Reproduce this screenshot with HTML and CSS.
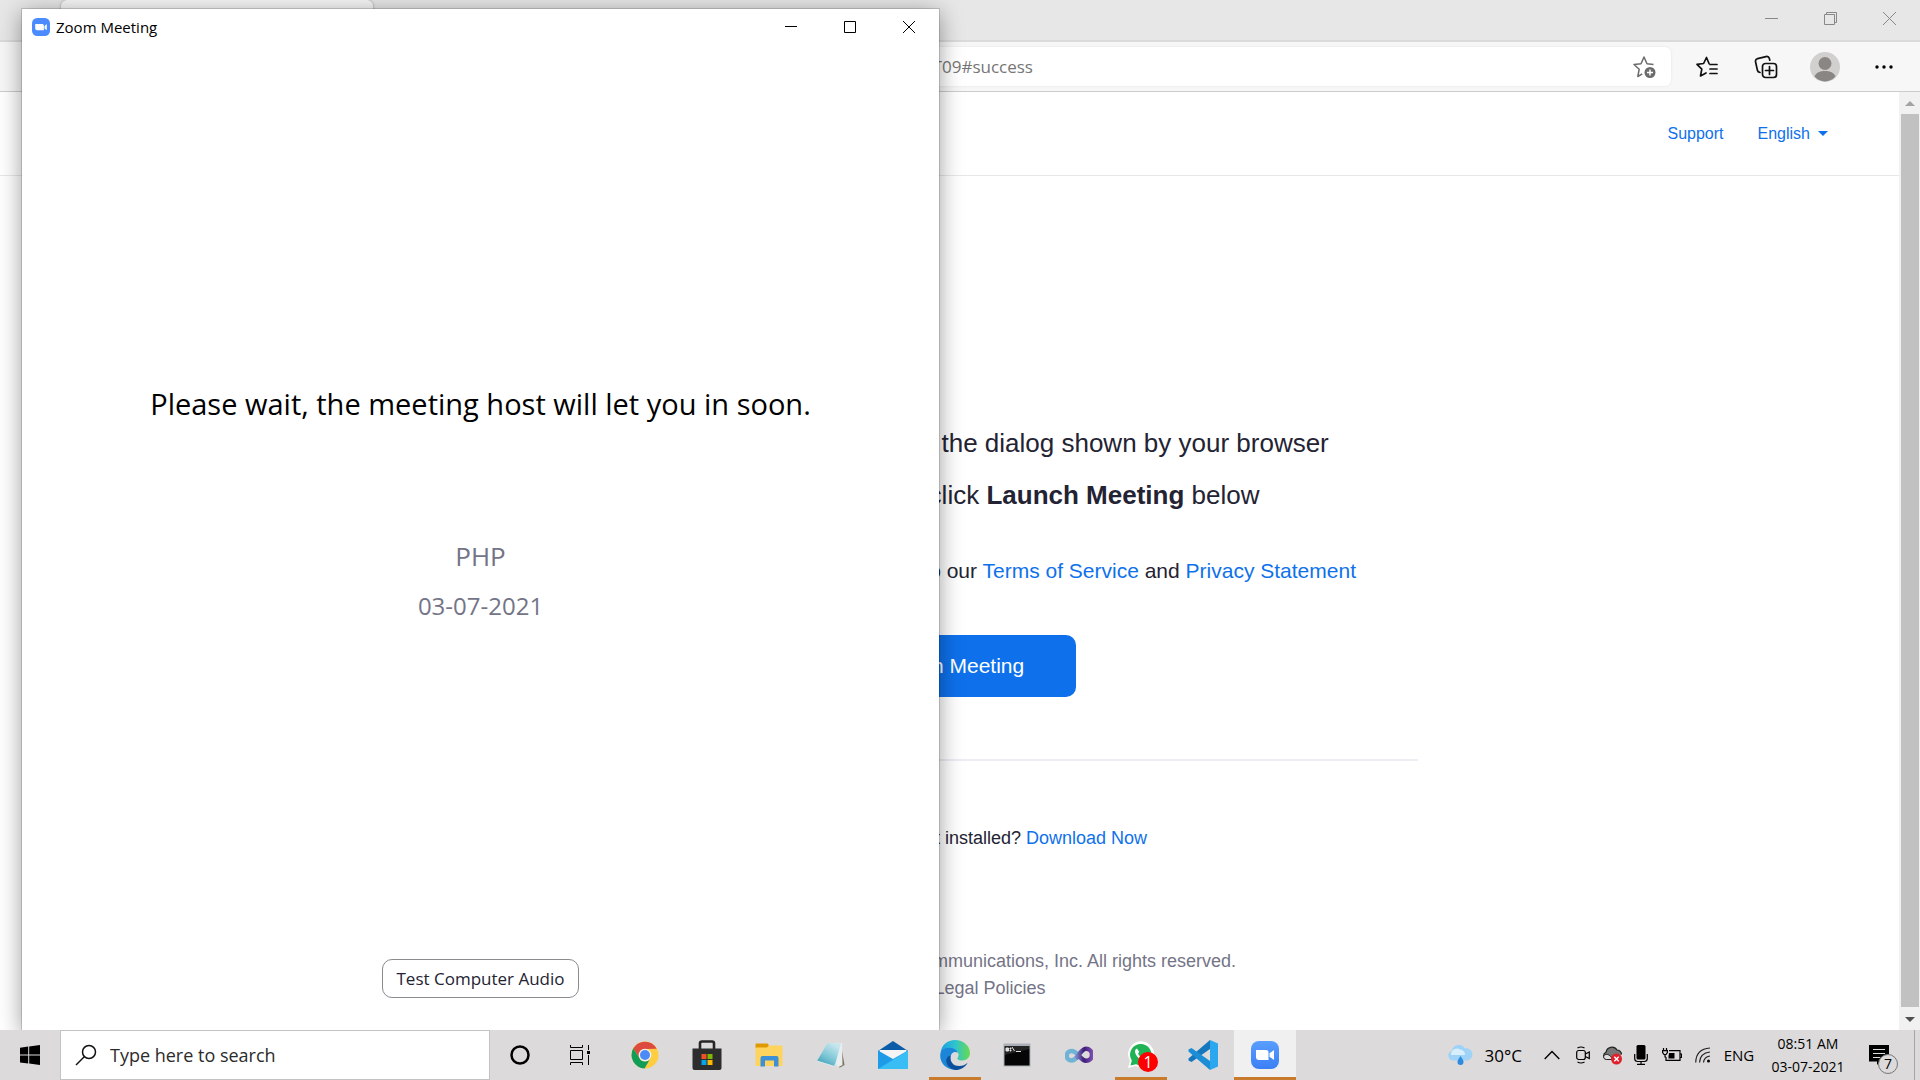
FILE: index.html
```html
<!DOCTYPE html>
<html lang="en">
<head>
<meta charset="utf-8">
<title>Launch Meeting - Zoom</title>
<link rel="stylesheet" href="styles.css">
</head>
<body>
<div class="screen">
  <div class="desktop">
    <div class="browser">
      <div class="tabstrip">
        <div class="tab"></div>
        <div class="caption-buttons">
          <button class="caption" aria-label="Minimize"><svg width="13" height="13" viewBox="0 0 13 13"><path d="M0 6.5h13"/></svg></button>
          <button class="caption" aria-label="Restore"><svg width="13" height="13" viewBox="0 0 13 13"><path d="M.5 2.5h10v10h-10zM2.500 2.500v-2h10v10h-2"/></svg></button>
          <button class="caption" aria-label="Close"><svg width="13" height="13" viewBox="0 0 13 13"><path d="M0 0l13 13M13 0L0 13"/></svg></button>
        </div>
      </div>
      <div class="toolbar">
        <div class="urlbar">
          <input class="url" type="text" aria-label="Address" value="us04web.zoom.us/j/76095224187?pwd=aGJ0Vk5wQmRhL3ZsdFNjWVhUM1h6Zz09LKdGVhbTEyMT09#success">
          <button class="tool-add" aria-label="Add to favorites"><svg width="24" height="24" viewBox="0 0 24 24" fill="none" stroke="#6b6b6b" stroke-width="1.5" stroke-linejoin="round"><path d="M21.500 9.500l-6.500-.8L12 2 9 8.700l-7 .8 5.200 4.700L5.800 21.500l4.500-2.600"/><circle cx="18" cy="17.500" r="5.500" fill="#6b6b6b" stroke="none"/><path d="M18 14.500v6M15 17.500h6" stroke="#fff"/></svg></button>
        </div>
        <button class="tool" aria-label="Favorites"><svg width="24" height="24" viewBox="0 0 24 24" fill="none" stroke="#111" stroke-width="1.700" stroke-linejoin="round" stroke-linecap="round"><path d="M14 8.500L11.500 2.500 8.600 8.500 2 9.400l4.800 4.700-1.300 6.800 5.500-3"/><path d="M15 9.500h7M15 14h7M15 18.500h7"/></svg></button>
        <button class="tool" aria-label="Collections"><svg width="24" height="24" viewBox="0 0 24 24" fill="none" stroke="#111" stroke-width="1.700" stroke-linejoin="round" stroke-linecap="round"><rect x="8.500" y="8.500" width="14" height="14" rx="3"/><path d="M15.500 11.500v8M11.500 15.500h8M6 17.500c-1.500-.3-2.300-1-2.600-2.300L1.600 7c-.4-1.700.4-3 2-3.400l8.400-2c1.700-.4 2.900.4 3.400 2l.4 1.600"/></svg></button>
        <button class="tool" aria-label="Profile"><svg width="30" height="30" viewBox="0 0 30 30"><circle cx="15" cy="15" r="15" fill="#d2d0ce"/><circle cx="15" cy="11.500" r="6.500" fill="#8a8683"/><path d="M4.500 24.500C6 20.500 10 19 15 19s9 1.500 10.500 5.500A15 15 0 0 1 15 29.500 15 15 0 0 1 4.500 24.500z" fill="#8a8683"/></svg></button>
        <button class="tool" aria-label="Settings and more"><svg width="18" height="4" viewBox="0 0 18 4"><circle cx="2" cy="2" r="1.700"/><circle cx="9" cy="2" r="1.700"/><circle cx="16" cy="2" r="1.700"/></svg></button>
      </div>
      <div class="viewport">
        <div class="page">
          <header class="site-header">
            <a href="#support">Support</a>
            <a class="language" href="#language">English <svg width="10" height="5" viewBox="0 0 10 5"><path d="M0 0h10L5 5z" fill="#0e71eb"/></svg></a>
          </header>
          <main class="launch">
            <p class="lead">Click <b>Open Zoom Meetings</b> on the dialog shown by your browser</p>
            <p class="lead">If you don’t see a dialog, click <b>Launch Meeting</b> below</p>
            <p class="terms">By clicking "Launch Meeting", you agree to our <a href="#terms">Terms of Service</a> and <a href="#privacy">Privacy Statement</a></p>
            <button class="launch-button">Launch Meeting</button>
            <hr class="rule">
            <p class="download">Don’t have Zoom Client installed? <a href="#download">Download Now</a></p>
          </main>
          <footer class="site-footer">
            <p>Copyright © 2021 Zoom Video Communications, Inc. All rights reserved.</p>
            <p>Privacy &amp; Legal Policies</p>
          </footer>
        </div>
        <div class="scrollbar">
          <svg width="10" height="5" viewBox="0 0 10 5"><path d="M0 5h10L5 0z" fill="#a3a3a3"/></svg>
          <div class="thumb"></div>
          <svg width="10" height="5" viewBox="0 0 10 5"><path d="M0 0h10L5 5z" fill="#505050"/></svg>
        </div>
      </div>
    </div>

    <section class="meeting">
      <div class="titlebar">
        <svg width="18" height="18" viewBox="0 0 28 28"><rect width="28" height="28" rx="8" fill="#4a8cff"/><path d="M5 9.500h11a2.500 2.500 0 0 1 2.500 2.500v7H8a3 3 0 0 1-3-3zM19.500 12.500L23 9.500v9.500l-3.500-2.500z" fill="#fff"/></svg>
        <h1 class="title">Zoom Meeting</h1>
        <button class="caption dark" aria-label="Minimize"><svg width="12" height="12" viewBox="0 0 12 12"><path d="M0 5.500h12"/></svg></button>
        <button class="caption dark" aria-label="Maximize"><svg width="12" height="12" viewBox="0 0 12 12"><path d="M.5.5h11v11H.5z"/></svg></button>
        <button class="caption dark" aria-label="Close"><svg width="12" height="12" viewBox="0 0 12 12"><path d="M0 0l12 12M12 0L0 12"/></svg></button>
      </div>
      <div class="waiting">
        <h2 class="notice">Please wait, the meeting host will let you in soon.</h2>
        <p class="topic">PHP</p>
        <p class="date">03-07-2021</p>
        <button class="audio">Test Computer Audio</button>
      </div>
    </section>
  </div>

  <nav class="taskbar">
    <button class="start" aria-label="Start"><svg width="20" height="20" viewBox="0 0 20 20"><path d="M0 2.700L8.200 1.500V9.500H0zM9.200 1.400L20 0v9.500H9.200zM0 10.500h8.200v8L0 17.400zM9.200 10.500H20V20L9.200 18.600z"/></svg></button>
    <label class="search">
      <svg width="22" height="22" viewBox="0 0 22 22" fill="none" stroke="#111" stroke-width="1.500"><circle cx="14" cy="8" r="6.500"/><path d="M9.500 12.500L1 21"/></svg>
      <input type="text" aria-label="Search" placeholder="Type here to search">
    </label>
    <button class="system" aria-label="Cortana"><svg width="20" height="20" viewBox="0 0 20 20"><circle cx="10" cy="10" r="8.500" fill="none" stroke="#000" stroke-width="2.500"/></svg></button>
    <button class="system" aria-label="Task View"><svg width="20" height="20" viewBox="0 0 20 20" fill="none" stroke="#000"><path d="M.5 5.500h12v9H.500zM.5 0v2.500h12V0M.5 20v-2.500h12V20M18.500 0v5M18.500 10v10"/><path d="M17 6h3v3h-3z" fill="#000" stroke="none"/></svg></button>
    <div class="apps">
      <button class="app" aria-label="Chrome"><svg width="28" height="28" viewBox="0 0 28 28"><circle cx="14" cy="14" r="13.500" fill="#ffcd40"/><path d="M2.300 7.300A13.500 13.500 0 0 1 25.700 7.800L14 8a6.300 6.300 0 0 0-5.500 9.200z" fill="#dd4b3e"/><path d="M2.300 7.300A13.500 13.500 0 0 0 13.500 27.500L19.500 17.200A6.300 6.300 0 0 1 8.500 17.200z" fill="#119c58"/><circle cx="14" cy="14" r="6.300" fill="#f1f1f1"/><circle cx="14" cy="14" r="5" fill="#4c8bf5"/></svg></button>
      <button class="app" aria-label="Microsoft Store"><svg width="30" height="30" viewBox="0 0 30 30"><path d="M8 9V3.500A2 2 0 0 1 10 1.500h10a2 2 0 0 1 2 2V9" fill="none" stroke="#262626" stroke-width="2.600"/><path d="M.5 8.500h29V28a2 2 0 0 1-2 2h-25a2 2 0 0 1-2-2z" fill="#2d2d2d"/><path d="M9.500 14h5v5h-5z" fill="#f25022"/><path d="M15.500 14h5v5h-5z" fill="#7fba00"/><path d="M9.500 20h5v5h-5z" fill="#00a4ef"/><path d="M15.500 20h5v5h-5z" fill="#ffb900"/></svg></button>
      <button class="app" aria-label="File Explorer"><svg width="28" height="24" viewBox="0 0 28 24"><path d="M.5 1.500A1 1 0 0 1 1.500.5h11l1.500 2-2 3H.5z" fill="#e09a00"/><path d="M.5 4.500H12l2-2h12.500a1 1 0 0 1 1 1V23H.5z" fill="#ffd45e"/><path d="M5.500 23.500V15a2 2 0 0 1 2-2h14a2 2 0 0 1 2 2v8.500h-4.500v-6h-9v6z" fill="#3d8fd6"/></svg></button>
      <button class="app" aria-label="Notepad"><svg width="28" height="26" viewBox="0 0 28 26"><defs><linearGradient id="pad" x1="0" y1="1" x2=".6" y2="0"><stop offset="0" stop-color="#2f93ad"/><stop offset=".5" stop-color="#7cc6d6"/><stop offset="1" stop-color="#c4e6ec"/></linearGradient></defs><path d="M24 3l3.500 20-4.500 2.500-3-1z" fill="#7d715c"/><path d="M11 1.500L25 1l.5 22-5 2.500z" fill="#e8edef"/><path d="M10.500 1L24 1.500 17.500 24.500 0 19z" fill="url(#pad)"/><path d="M0 19l17.500 5.500 1-3" fill="none" stroke="#dcebee"/></svg></button>
      <button class="app" aria-label="Mail"><svg width="30" height="28" viewBox="0 0 30 28"><path d="M0 10L15 0l15 10v4H0z" fill="#0a5ba8"/><path d="M1.500 9h27v8L15 22 1.500 17z" fill="#f4f4f4"/><path d="M0 9.500L15 18 30 9.500V28H0z" fill="#1e9be6"/><path d="M0 28L30 9.500V28z" fill="#38bdf4"/></svg></button>
      <button class="app open" aria-label="Edge"><svg width="30" height="30" viewBox="0 0 30 30"><defs><linearGradient id="edge-top" x1="0" x2="1"><stop offset="0" stop-color="#1b9fe0"/><stop offset=".5" stop-color="#2fc3cf"/><stop offset="1" stop-color="#67dc4c"/></linearGradient></defs><path d="M.5 13C1.500 5 7.500 0 15 0c8.500 0 15 6 15 13 0 4.500-3.300 7.500-8 7.500-3.500 0-5.500-1.500-4.200-3 1.300-1.600 1-4.500-.8-6.200C13 7.500 4 7.500.5 13z" fill="url(#edge-top)"/><path d="M.2 16C0 11 4 7.800 9 7.800c4 0 7.500 1.700 9 5-4-2.300-7.500.5-7.500 5C10.500 24 16 29 21 28.700 11 32.500.5 26 .2 16z" fill="#1b85d8"/><path d="M10.700 15.500C9 21 13 26 19 26c3.500 0 6.500-1.300 8.700-3.300C25 27.500 20 30 15.500 30 10 29.500 5 24 6.500 19c.7-2 2.200-3.200 4.200-3.500z" fill="#0c4f9c"/></svg></button>
      <button class="app" aria-label="Command Prompt"><svg width="28" height="24" viewBox="0 0 28 24"><rect x=".5" y=".5" width="27" height="23" fill="#a9afb5"/><path d="M1.500 3h25v19.500h-25z" fill="#050505"/><path d="M3 5h2.500v3H3zM7 5h1v1H7zM7 7h1v1H7zM9 4l2.500 4M13 8.500h5" fill="#ddd" stroke="#ddd"/><path d="M1.500 12L26.500 6V3h-25z" fill="#fff" opacity=".12"/></svg></button>
      <button class="app" aria-label="Visual Studio"><svg width="28" height="18" viewBox="0 0 28 18" fill="none" stroke-width="4.500"><defs><linearGradient id="vs-purple" x1="0" x2="1"><stop offset="0" stop-color="#7f86c9"/><stop offset=".5" stop-color="#3d1d78"/><stop offset="1" stop-color="#7b4bb0"/></linearGradient></defs><path d="M14 9C10 14 8.500 14.500 6.500 14.500A4.200 4.200 0 0 1 6.500 5C9 5 11 6.500 14 9.500" stroke="#6fb3d5"/><path d="M11 12.500C14.500 8 17 2.800 21 2.800a6 6 0 0 1 0 12C18 14.800 16 12 13 9" stroke="url(#vs-purple)"/></svg></button>
      <button class="app open whatsapp" aria-label="WhatsApp"><svg width="28" height="28" viewBox="0 0 28 28"><path d="M1 27l2-7A13 13 0 1 1 8.500 25z" fill="#fff"/><path d="M3.500 24.500l1.300-5A10.700 10.700 0 1 1 9 23.200z" fill="#1fb355"/><path d="M10 7.500c-2 .7-2.500 3-1.500 5.200 1.700 3.600 4.500 6.300 8.500 7.300 2 .3 3.500-1 3.500-3l-3-1.500-1.500 1.700c-2.300-1-4-2.700-5-4.700l1.300-1.500z" fill="#fff"/></svg><span class="badge">1</span></button>
      <button class="app" aria-label="Visual Studio Code"><svg width="30" height="30" viewBox="0 0 30 30"><path d="M22 0L30 3.500v23L22 30z" fill="#2aa7ee"/><path d="M22 0v9L3.500 22 .5 20.500v-2z" fill="#1577bd"/><path d="M22 30v-9L3.500 8 .5 9.500v2z" fill="#1b8ed6"/></svg></button>
      <button class="app open active" aria-label="Zoom"><svg width="28" height="28" viewBox="0 0 28 28"><defs><linearGradient id="zoom-blue" x2="0" y2="1"><stop offset="0" stop-color="#5a9eff"/><stop offset="1" stop-color="#3b7ff5"/></linearGradient></defs><rect width="28" height="28" rx="8" fill="url(#zoom-blue)"/><path d="M5 9h10a2.500 2.500 0 0 1 2.500 2.500V19H8a3 3 0 0 1-3-3zM18.500 12.300L23 9v10l-4.500-3.300z" fill="#fff"/></svg></button>
    </div>
    <div class="tray">
      <button class="weather"><svg width="26" height="20" viewBox="0 0 26 20"><path d="M6 15.500a5 5 0 0 1-1-9.800A7 7 0 0 1 18 3.500a6 6 0 0 1 2.500 12z" fill="#9fd2f7"/><path d="M4 10a6 6 0 0 1 9-5.500 5 5 0 0 1 5 5.500z" fill="#d8eefc"/><path d="M13.500 11c2 3 3 4.500 3 6a3 3 0 0 1-6 0c0-1.500 1-3 3-6z" fill="#2f8be0"/></svg>30°C</button>
      <button class="chevron" aria-label="Show hidden icons"><svg width="16" height="10" viewBox="0 0 16 10"><path d="M.7 9L8 1.500 15.300 9" fill="none" stroke="#000" stroke-width="1.400"/></svg></button>
      <button class="narrow" aria-label="Meet Now"><svg width="14" height="18" viewBox="0 0 14 18" fill="none" stroke="#000" stroke-width="1.200"><rect x=".7" y="4.500" width="8.600" height="9" rx="2"/><path d="M9.300 8l4-2v6.500l-4-2M1.500 2Q5 0 8.500 2M1.500 16Q5 18 8.500 16"/></svg></button>
      <button class="medium" aria-label="OneDrive"><svg width="20" height="20" viewBox="0 0 20 20"><path d="M4.500 14.500A3.800 3.800 0 0 1 4 7.300 6 6 0 0 1 15 5a4.500 4.500 0 0 1 4.500 4.500" fill="#777" stroke="#222" stroke-width="1.200"/><path d="M4.500 14.500c-3-.5-3.500-3-2-4.500 3-1.500 6 0 8 4.500z" fill="#ddd" stroke="#222"/><circle cx="14.500" cy="14" r="5.500" fill="#e0202b"/><path d="M12.300 11.800l4.400 4.400M16.700 11.800l-4.400 4.400" stroke="#fff" stroke-width="1.400"/></svg></button>
      <button class="narrow" aria-label="Microphone"><svg width="14" height="20" viewBox="0 0 14 20"><rect x="2.500" width="9" height="14.500" rx="1.500"/><path d="M.7 9v4.500a3 3 0 0 0 3 3h6.600a3 3 0 0 0 3-3V9M7 16.500v2.800M3 19.300h8" fill="none" stroke="#000" stroke-width="1.200"/></svg></button>
      <button class="wide" aria-label="Battery"><svg width="20" height="14" viewBox="0 0 20 14" fill="none" stroke="#000" stroke-width="1.200"><path d="M7 2.600h11v9.800H4V9"/><path d="M18 6h1.500v3.500H18"/><path d="M7 5h5.500v5.500h-6V8.500z" fill="#000" stroke="none"/><path d="M1.500 0v2M4.500 0v2M.6 2.600h4.800v2L4 6.500H2L.6 4.600zM3 6.500V9h1"/></svg></button>
      <button class="narrow" aria-label="Network"><svg width="16" height="16" viewBox="0 0 16 16" fill="none" stroke="#222" stroke-width="1.200"><path d="M.7 15.500Q1 2 15 1M4.500 15.500Q5 6 15 5M8.500 15.500Q9 10 15 9"/><circle cx="13.500" cy="14" r="1.500" fill="#000" stroke="none"/></svg></button>
      <button class="language-input">ENG</button>
      <button class="clock"><span>08:51 AM</span><span>03-07-2021</span></button>
      <button class="notifications" aria-label="Notifications"><svg width="20" height="20" viewBox="0 0 20 20"><path d="M0 0h20v16.500h-9L8 20v-3.500H0z"/><path d="M4 4.500h12M4 8.500h12M4 12.500h7" stroke="#ddd"/></svg><span class="count">7</span></button>
      <button class="show-desktop" aria-label="Show desktop"></button>
    </div>
  </nav>
</div>
</body>
</html>
```
FILE: styles.css
```css
* { box-sizing: border-box; }

body {
  margin: 0;
  font-family: "Open Sans", "Noto Sans", sans-serif;
  color: #000;
}

button {
  font: inherit;
  color: inherit;
  background: none;
  border: 0;
  padding: 0;
}

p, h1, h2 { margin: 0; font-weight: 400; }
a { color: #0e71eb; text-decoration: none; }
svg { display: block; flex: none; }

.screen {
  display: flex;
  flex-direction: column;
  height: 100vh;
  overflow: hidden;
}

.desktop {
  position: relative;
  flex: 1;
  min-height: 0;
  overflow: hidden;
}

/* Browser window */
.browser {
  display: flex;
  flex-direction: column;
  height: 100%;
  background: #fff;
}

.tabstrip {
  display: flex;
  justify-content: space-between;
  height: 42px;
  padding: 0 1px 0 61px;
  background: #e7e7e7;
  border-bottom: 2px solid #dadada;
}

.tab {
  width: 312px;
  background: #f7f7f7;
  border-radius: 6px 6px 0 0;
  box-shadow: 0 0 3px rgba(0, 0, 0, .3);
}

.caption-buttons { display: flex; height: 37px; }

.caption {
  display: flex;
  align-items: center;
  justify-content: center;
  width: 59px;
  height: 100%;
}

.caption path { fill: none; stroke: #888; }
.caption.dark path { stroke: #000; }

.toolbar {
  display: flex;
  align-items: center;
  height: 50px;
  padding: 0 7px 0 160px;
  background: #f7f7f7;
  border-bottom: 1px solid #ccc;
}

.urlbar {
  display: flex;
  flex: 1;
  height: 39px;
  margin-right: 6px;
  padding-right: 15px;
  background: #fff;
  border-radius: 6px;
  box-shadow: 0 0 3px rgba(0, 0, 0, .08);
}

.url {
  flex: 1;
  min-width: 0;
  padding: 0 0 0 8px;
  border: 0;
  background: none;
  font: 17px "Open Sans", sans-serif;
  color: #767676;
}

.tool, .tool-add { display: flex; align-items: center; justify-content: center; }
.tool { width: 59px; height: 100%; }

.viewport { display: flex; flex: 1; min-height: 0; }

.page {
  flex: 1;
  min-width: 0;
  font-family: "Liberation Sans", Arial, sans-serif;
  color: #232333;
  white-space: nowrap;
}

.site-header {
  display: flex;
  align-items: center;
  justify-content: flex-end;
  gap: 34px;
  height: 84px;
  padding-right: 71px;
  border-bottom: 1px solid #e8e8e8;
  font-size: 16px;
}

.language { display: flex; align-items: center; gap: 8px; }

.launch {
  display: flex;
  flex-direction: column;
  align-items: center;
  padding-top: 241px;
}

.lead { font-size: 26px; line-height: 52px; }
.terms { margin-top: 38px; font-size: 21px; line-height: 24px; }

.launch-button {
  width: 253px;
  height: 62px;
  margin-top: 52px;
  border-radius: 10px;
  background: #0e71eb;
  color: #fff;
  font-size: 21px;
}

.rule {
  width: 937px;
  height: 2px;
  margin: 62px 0 0;
  border: 0;
  background: #ededf4;
}

.download { margin-top: 65px; font-size: 18px; line-height: 24px; }

.site-footer {
  margin-top: 98px;
  font-size: 18px;
  line-height: 27px;
  text-align: center;
  color: #747487;
}

.scrollbar {
  display: flex;
  flex-direction: column;
  align-items: center;
  width: 21px;
  padding: 9px 1px 8px 2px;
  background: #f1f1f1;
}

.thumb {
  flex: 1;
  width: 18px;
  margin: 8px 0 10px;
  background: #c1c1c1;
}

/* Meeting window */
.meeting {
  position: absolute;
  top: 9px;
  bottom: 0;
  left: 22px;
  display: flex;
  flex-direction: column;
  width: 917px;
  background: #fff;
  box-shadow: 0 0 0 1px rgba(0, 0, 0, .15), 0 4px 22px rgba(0, 0, 0, .4);
}

.titlebar {
  display: flex;
  align-items: center;
  height: 36px;
  padding: 0 1px 0 10px;
}

.title { flex: 1; margin-left: 6px; font-size: 15px; }

.waiting {
  display: flex;
  flex: 1;
  flex-direction: column;
  align-items: center;
  padding: 339px 0 32px;
}

.notice { font-size: 29px; line-height: 40px; }
.topic { margin-top: 112px; font-size: 26px; line-height: 40px; color: #747487; }
.date { margin-top: 10px; font-size: 24px; line-height: 40px; color: #747487; }

.audio {
  width: 197px;
  height: 39px;
  margin-top: auto;
  border: 1px solid #8a8a8f;
  border-radius: 10px;
  font-size: 17px;
  color: #232333;
}

/* Taskbar */
.taskbar {
  display: flex;
  height: 50px;
  background: #dcdada;
}

.taskbar button {
  display: flex;
  flex: none;
  align-items: center;
  justify-content: center;
  height: 100%;
}

.taskbar .start { width: 60px; }
.taskbar .system { width: 60px; }

.search {
  display: flex;
  align-items: center;
  gap: 13px;
  width: 430px;
  padding-left: 14px;
  background: #fff;
  border: 1px solid #c3c3c5;
}

.search input {
  flex: 1;
  min-width: 0;
  padding: 0;
  border: 0;
  font: 18px "Open Sans", sans-serif;
}

.search input::placeholder { color: #2b2b2b; opacity: 1; }

.apps { display: flex; margin-left: 4px; }
.taskbar .app { position: relative; width: 62px; }

.app.open::after {
  content: "";
  position: absolute;
  right: 5px;
  bottom: 0;
  left: 5px;
  height: 3px;
  background: #c97b2d;
}

.app.active { background: #f1f0f0; }
.app.active::after { right: 0; left: 0; }

.badge {
  position: absolute;
  top: 22px;
  left: 28px;
  width: 20px;
  border-radius: 50%;
  background: #f00;
  color: #fff;
  font-size: 16px;
  line-height: 20px;
}

.tray { display: flex; margin-left: auto; font-size: 15px; }
.taskbar .weather { gap: 12px; padding-right: 12px; font-size: 17px; }
.taskbar .chevron, .taskbar .wide { width: 36px; }
.taskbar .narrow { width: 26px; }
.taskbar .medium { width: 32px; }
.taskbar .language-input { width: 46px; }
.taskbar .clock { flex-direction: column; width: 92px; font-size: 14px; line-height: 23px; }
.taskbar .notifications { position: relative; width: 60px; padding-right: 10px; }
.taskbar .show-desktop { width: 6px; border-left: 1px solid #a5a5a5; }

.count {
  position: absolute;
  top: 24px;
  left: 24px;
  width: 20px;
  border: 1px solid #777;
  border-radius: 50%;
  background: #dcdada;
  font-size: 14px;
  line-height: 18px;
}
```
